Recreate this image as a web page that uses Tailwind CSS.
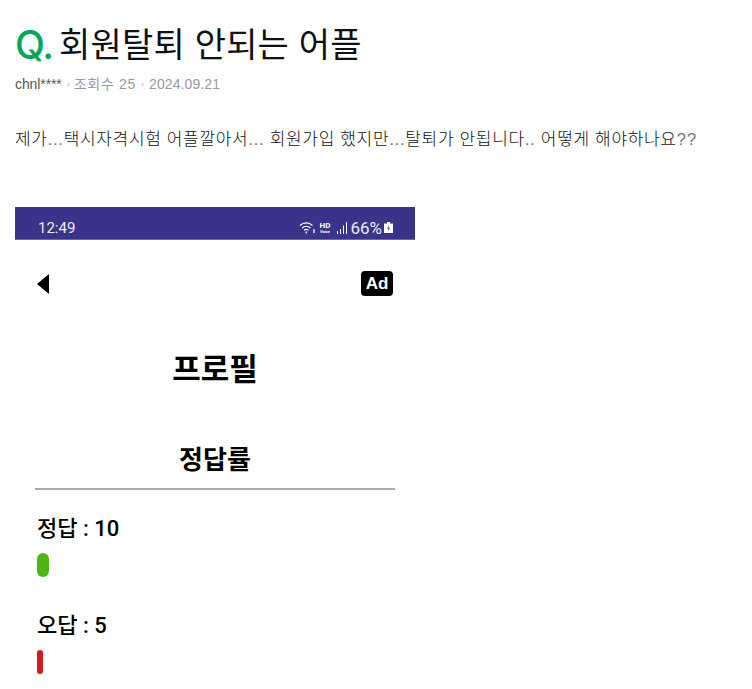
<!DOCTYPE html>
<html lang="ko">
<head>
<meta charset="utf-8">
<title>회원탈퇴 안되는 어플</title>
<script src="https://cdn.jsdelivr.net/npm/@tailwindcss/browser@4"></script>
</head>
<body class="bg-white overflow-hidden font-['Liberation_Sans','Noto_Sans_CJK_KR',sans-serif]">
<div class="h-[689px] overflow-hidden pl-[15px] pt-[23px]">
  <h1 class="flex items-center h-[44px] text-[34px] leading-[44px] font-normal text-[#111] whitespace-nowrap tracking-[0.2px]">
    <span class="font-['Inter',sans-serif] text-[#03a65a] font-medium text-[39px] mr-[6px] tracking-[-1px]">Q.</span>회원탈퇴 안되는 어플
  </h1>
  <div class="mt-[7px] flex items-center text-[14px] leading-[20px] text-[#999]">
    <span class="text-[#555] tracking-[-0.1px]">chnl****</span>
    <span class="ml-[5px] mr-[4px] w-[3px] h-[3px] rounded-full bg-[#ddd]"></span>
    <span class="tracking-[0.7px]">조회수 25</span>
    <span class="mx-[5px] w-[3px] h-[3px] rounded-full bg-[#ddd]"></span>
    <span class="tracking-[0.1px]">2024.09.21</span>
  </div>
  <p class="mt-[34px] text-[17px] leading-[24px] font-light text-[#111] whitespace-nowrap tracking-[0.65px]">제가<span class="text-[#777]">...</span>택시자격시험 어플깔아서<span class="text-[#777]">...</span> 회원가입 했지만<span class="text-[#777]">...</span>탈퇴가 안됩니다<span class="text-[#777]">..</span> 어떻게 해야하나요<span class="text-[#777]">??</span></p>

  <div class="mt-[55px] w-[400px] h-[482px] overflow-hidden font-['Roboto','Noto_Sans_CJK_KR',sans-serif]">
    <div class="h-[33px] bg-[#39338a] border-b border-[#6f6ab0] text-white flex items-center justify-between pl-[23px] pr-[22px] pt-[9px] text-[15px]">
      <span class="opacity-90 pt-[2px]">12:49</span>
      <div class="flex items-center gap-[2px]">
        <svg class="w-[17px] h-[13px]" viewBox="0 0 17 13" fill="none" stroke="white" stroke-width="1.100"><path d="M1 4.500c3.500-3.500 9-3.500 12.500 0M3 7c2.500-2 6-2 8.500 0M5 9.300c1.200-1 3.300-1 4.500 0"/><path d="M7.200 10.500v2M15 8v4" stroke-width="1.300"/></svg>
        <div class="w-[13px] flex flex-col items-center font-bold leading-none">
          <span class="text-[8px]">HD</span>
          <span class="text-[4px]">Voice</span>
        </div>
        <svg class="ml-[3px] w-[12px] h-[12px]" viewBox="0 0 12 12" fill="white"><path d="M1 9h1v3H1zM4 7h1v5H4zM7 3.500h1V12H7zM10 0h1v12h-1z"/></svg>
        <span class="text-[17px] leading-[20px] opacity-90">66%</span>
        <svg class="w-[9px] h-[11px]" viewBox="0 0 9 11" fill="white"><path d="M3 0h3v1.500h3V11H0V1.500h3zM5 3.500 3 6.500h1.500L4 9l2-3H4.500z" fill-rule="evenodd"/></svg>
      </div>
    </div>
    <div class="flex items-center justify-between h-[87px] pl-[22px] pr-[22px]">
      <svg class="w-[12px] h-[20px]" viewBox="0 0 12 20" fill="black"><path d="M12 0v20L0 10z"/></svg>
      <div class="w-[32px] h-[25px] rounded-[4px] bg-black text-white text-[17px] leading-[25px] font-bold text-center font-['Liberation_Sans',sans-serif]">Ad</div>
    </div>
    <h2 class="mt-[23px] text-center text-[31px] leading-[40px] font-bold text-black">프로필</h2>
    <h3 class="mt-[52px] text-center text-[26px] leading-[36px] font-bold text-black">정답률</h3>
    <div class="mx-[20px] mt-[10px] h-[2px] bg-[#aaa]"></div>
    <p class="mt-[25px] pl-[22px] text-[22px] leading-[28px] font-medium text-black">정답 : 10</p>
    <div class="ml-[22px] mt-[10px] w-[12px] h-[24px] rounded-full bg-[#4cb80f]"></div>
    <p class="mt-[35px] pl-[22px] text-[22px] leading-[28px] font-medium text-black">오답 : 5</p>
    <div class="ml-[22px] mt-[10px] w-[6px] h-[24px] rounded-full bg-[#d01c1c]"></div>
  </div>
</div>
</body>
</html>
